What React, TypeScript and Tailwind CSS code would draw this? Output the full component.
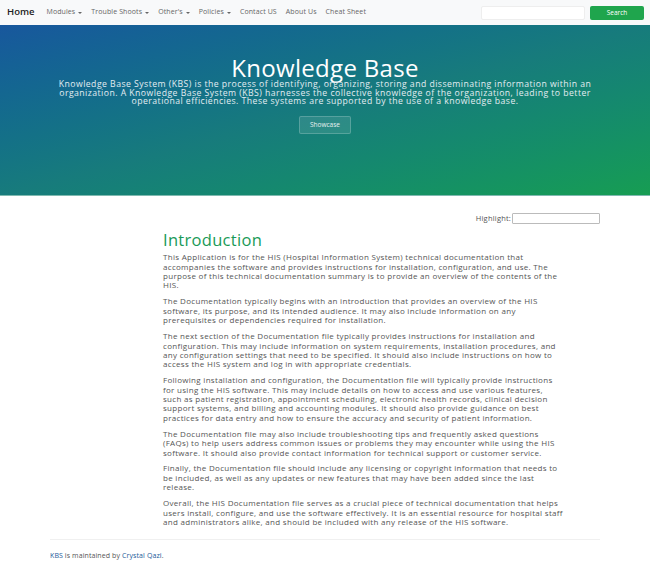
const navItems = [
  { label: "Modules", caret: true },
  { label: "Trouble Shoots", caret: true },
  { label: "Other's", caret: true },
  { label: "Policies", caret: true },
  { label: "Contact US", caret: false },
  { label: "About Us", caret: false },
  { label: "Cheat Sheet", caret: false },
];

const paragraphs = [
  "This Application is for the HIS (Hospital Information System) technical documentation that accompanies the software and provides instructions for installation, configuration, and use. The purpose of this technical documentation summary is to provide an overview of the contents of the HIS.",
  "The Documentation typically begins with an introduction that provides an overview of the HIS software, its purpose, and its intended audience. It may also include information on any prerequisites or dependencies required for installation.",
  "The next section of the Documentation file typically provides instructions for installation and configuration. This may include information on system requirements, installation procedures, and any configuration settings that need to be specified. It should also include instructions on how to access the HIS system and log in with appropriate credentials.",
  "Following installation and configuration, the Documentation file will typically provide instructions for using the HIS software. This may include details on how to access and use various features, such as patient registration, appointment scheduling, electronic health records, clinical decision support systems, and billing and accounting modules. It should also provide guidance on best practices for data entry and how to ensure the accuracy and security of patient information.",
  "The Documentation file may also include troubleshooting tips and frequently asked questions (FAQs) to help users address common issues or problems they may encounter while using the HIS software. It should also provide contact information for technical support or customer service.",
  "Finally, the Documentation file should include any licensing or copyright information that needs to be included, as well as any updates or new features that may have been added since the last release.",
  "Overall, the HIS Documentation file serves as a crucial piece of technical documentation that helps users install, configure, and use the software effectively. It is an essential resource for hospital staff and administrators alike, and should be included with any release of the HIS software.",
];

export default function App() {
  return (
    <div className="min-h-[578px] bg-white font-['Open_Sans',sans-serif]">
      {/* navbar */}
      <nav className="flex h-[25px] items-center bg-[#f8f9fa] pl-[7px] pr-[6px]">
        <a className="mr-[12px] text-[9.5px] font-semibold text-[#222]">Home</a>
        <ul className="flex items-center gap-[9px]">
          {navItems.map((item) => (
            <li
              key={item.label}
              className="flex items-center gap-[3px] text-[7px] tracking-[0.1px] text-[#666]"
            >
              {item.label}
              {item.caret && (
                <span className="mt-[1px] h-0 w-0 border-x-[2px] border-t-[2.5px] border-x-transparent border-t-[#666]" />
              )}
            </li>
          ))}
        </ul>
        <div className="ml-auto flex items-center gap-[5px]">
          <input className="h-[14px] w-[104px] rounded-[2px] border border-[#eee] bg-white" />
          <button className="h-[14px] w-[54px] rounded-[2px] bg-[#1fa54d] text-[6.5px] text-white">
            Search
          </button>
        </div>
      </nav>

      {/* hero */}
      <header className="flex h-[171px] flex-col items-center border-b border-[#7fb9b0] bg-gradient-to-br from-[#18579d] via-[#177b7c] to-[#179d52] pt-[31px] text-center">
        <h1 className="text-[24px] leading-[24px] tracking-[0.3px] text-white">
          Knowledge Base
        </h1>
        <p className="w-[550px] text-[8.7px] leading-[8.6px] tracking-[0.45px] text-[#e3edf2]">
          Knowledge Base System (KBS) is the process of identifying, organizing,
          storing and disseminating information within an organization. A
          Knowledge Base System (KBS) harnesses the collective knowledge of the
          organization, leading to better operational efficiencies. These
          systems are supported by the use of a knowledge base.
        </p>
        <button className="mt-[10px] h-[18px] w-[52px] rounded-[2px] border border-white/20 bg-white/10 text-[6.5px] text-[#e6f0f0]">
          Showcase
        </button>
      </header>

      {/* content */}
      <main className="mx-[50px]">
        <div className="flex items-center justify-end pt-[17px]">
          <label className="mr-[1px] text-[7.5px] tracking-[0.2px] text-[#555]">
            Highlight:
          </label>
          <input className="h-[11px] w-[88px] rounded-[1px] border border-[#bbb]" />
        </div>
        <div className="ml-[113px] w-[400px]">
          <h2 className="mt-[6px] text-[16.5px] leading-[20px] tracking-[0.3px] text-[#199a57]">
            Introduction
          </h2>
          <div className="mt-[2px] flex flex-col gap-[6.5px]">
            {paragraphs.map((p, i) => (
              <p
                key={i}
                className="text-[8px] leading-[9.4px] tracking-[0.3px] text-[#555]"
              >
                {p}
              </p>
            ))}
          </div>
        </div>
        <footer className="mt-[13px] border-t border-[#f0f0f0] pt-[11px]">
          <p className="text-[7px] tracking-[0.1px] text-[#555]">
            <a className="text-[#1a5a9a]">KBS</a> is maintained by{" "}
            <a className="text-[#1a5a9a]">Crystal Qazi</a>.
          </p>
        </footer>
      </main>
    </div>
  );
}
